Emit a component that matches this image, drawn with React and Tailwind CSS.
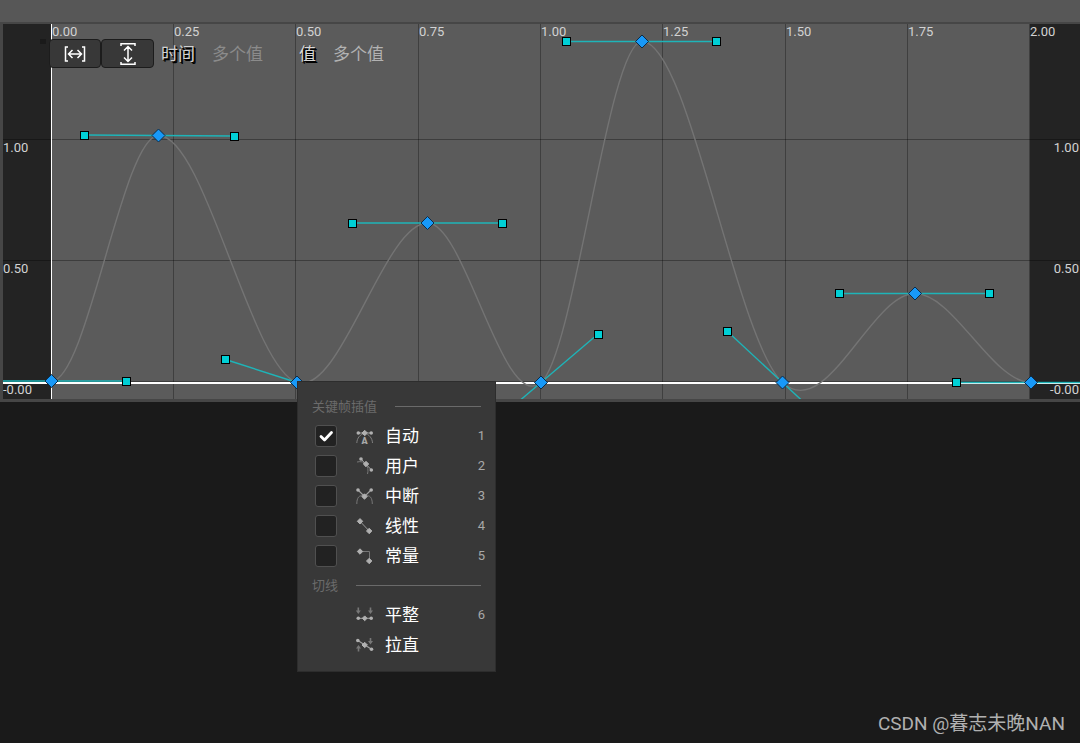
import React, { useState } from "react";

const timeTicks = [
  { x: 51, label: "0.00" },
  { x: 173, label: "0.25" },
  { x: 295, label: "0.50" },
  { x: 418, label: "0.75" },
  { x: 540, label: "1.00" },
  { x: 662, label: "1.25" },
  { x: 785, label: "1.50" },
  { x: 907, label: "1.75" },
  { x: 1029, label: "2.00" },
];

const valueTicks = [
  { y: 115, label: "1.00" },
  { y: 236, label: "0.50" },
  { y: 357, label: "-0.00" },
];

// slope is dy/dx at the key, handles are the ends of its tangent
const keys = [
  { x: 51.5, y: 357, slope: 0, handles: [[-24, 357], [126.5, 357]] },
  { x: 158.5, y: 111.5, slope: 0, handles: [[84, 111], [234, 112]] },
  { x: 297, y: 358.5, slope: 0.319, handles: [[225.5, 335.5]] },
  { x: 427.5, y: 199, slope: 0, handles: [[352.5, 199], [502.5, 199]] },
  { x: 541, y: 358.5, slope: -0.851, handles: [[484, 407], [598, 310]] },
  { x: 642, y: 17.5, slope: 0, handles: [[566.5, 17.5], [716.5, 17.5]] },
  { x: 782.5, y: 358.5, slope: 0.927, handles: [[727.5, 307.5], [837.5, 409.5]] },
  { x: 915, y: 269.5, slope: 0, handles: [[839.5, 269.5], [989.5, 269.5]] },
  { x: 1031, y: 358.5, slope: 0, handles: [[956, 358.5], [1106, 358.5]] },
];

const curvePath = keys
  .map((key, i) => {
    if (i === 0) return `M${key.x},${key.y}`;
    const prev = keys[i - 1];
    const d = (key.x - prev.x) / 3;
    return `C${prev.x + d},${prev.y + prev.slope * d} ${key.x - d},${key.y - key.slope * d} ${key.x},${key.y}`;
  })
  .join(" ");

const interpolations = [
  { id: "auto", label: "自动", shortcut: "1", Icon: AutoIcon },
  { id: "user", label: "用户", shortcut: "2", Icon: UserIcon },
  { id: "break", label: "中断", shortcut: "3", Icon: BreakIcon },
  { id: "linear", label: "线性", shortcut: "4", Icon: LinearIcon },
  { id: "constant", label: "常量", shortcut: "5", Icon: ConstantIcon },
];

const tangents = [
  { id: "flatten", label: "平整", shortcut: "6", Icon: FlattenIcon },
  { id: "straighten", label: "拉直", shortcut: "", Icon: StraightenIcon },
];

export default function App() {
  return (
    <div className="flex min-h-screen flex-col bg-[#1a1a1a] font-[Roboto,'Noto_Sans_CJK_SC',sans-serif]">
      <div className="h-[22px] bg-[#575757]" />
      <main className="relative border-t-2 border-b-3 border-[#464646]">
        <CurveCanvas />
        <Toolbar />
        <KeyMenu />
      </main>
      <footer className="mt-auto px-[15px] pb-[5px] text-right text-[19px] leading-7 text-[#b0b0b0]">
        CSDN @暮志未晚NAN
      </footer>
    </div>
  );
}

function CurveCanvas() {
  return (
    <svg viewBox="0 0 1080 375" className="block h-auto w-full">
      <rect width="1080" height="375" fill="#5b5b5b" />
      <rect width="51" height="375" fill="#232323" />
      <rect x="1030" width="50" height="375" fill="#232323" />
      <rect x="40" y="15" width="6" height="5" fill="#1a1a1a" />

      {/* Grid */}
      {timeTicks.map((tick) => (
        <rect key={tick.label} x={tick.x} width="1" height="375" fill="#3f3f3f" />
      ))}
      {valueTicks.map((tick) => (
        <rect key={tick.label} x="3" y={tick.y} width="1077" height="1" fill="#000" fillOpacity="0.32" />
      ))}
      <rect x="51" width="1" height="375" fill="#fff" />
      <rect x="3" y="358" width="1077" height="2" fill="#fff" />

      <g fill="#d2d2d2" fontSize="13">
        {timeTicks.map((tick) => (
          <text key={tick.label} x={tick.x + 1} y="12">
            {tick.label}
          </text>
        ))}
        {valueTicks.map((tick) => (
          <g key={tick.label}>
            <text x="3" y={tick.y + 13}>
              {tick.label}
            </text>
            <text x="1079" y={tick.y + 13} textAnchor="end">
              {tick.label}
            </text>
          </g>
        ))}
      </g>

      {/* Curve, tangents and keys */}
      <path d={curvePath} fill="none" stroke="#747474" strokeWidth="1.4" />
      {keys.map((key) => (
        <g key={key.x}>
          {key.handles.map(([x, y]) => (
            <line key={x} x1={key.x} y1={key.y} x2={x} y2={y} stroke="#1eb4b8" strokeWidth="1.4" />
          ))}
          {key.handles.map(([x, y]) => (
            <rect
              key={x}
              x={Math.floor(x) - 3.5}
              y={Math.floor(y) - 3.5}
              width="8"
              height="8"
              fill="#00d0d6"
              stroke="#000"
            />
          ))}
          <path
            d={`M${key.x},${key.y - 6.5} l6.5,6.5 l-6.5,6.5 l-6.5,-6.5 z`}
            fill="#1899f8"
            stroke="#0b2c49"
          />
        </g>
      ))}
      <rect width="3" height="375" fill="#464646" />
    </svg>
  );
}

function Toolbar() {
  return (
    <div className="absolute top-[15px] left-[49px] flex items-center text-[17px] leading-6">
      <button
        type="button"
        aria-label="Fit horizontal"
        className="flex h-[29px] w-[52px] items-center justify-center rounded border border-[#1c1c1c] bg-[#383838]"
      >
        <svg width="22" height="16" viewBox="0 0 22 16" fill="none" stroke="#fff" strokeWidth="1.5">
          <path d="M4 1H1.500V15H4 M18 1h2.500V15H18 M4.500 8H17.500 M8.500 4L4.500 8l4 4 M13.500 4l4 4-4 4" />
        </svg>
      </button>
      <button
        type="button"
        aria-label="Fit vertical"
        className="flex h-[29px] w-[53px] items-center justify-center rounded border border-[#1c1c1c] bg-[#383838]"
      >
        <svg width="16" height="22" viewBox="0 0 16 22" fill="none" stroke="#fff" strokeWidth="1.5">
          <path d="M1 3V.8H15V3 M1 19v2.200H15V19 M8 3.500V18.500 M4 7.500l4-4 4 4 M4 14.500l4 4 4-4" />
        </svg>
      </button>
      <label htmlFor="time" className="ml-[7px] text-[#d0d0d0] [text-shadow:1px_1px_0_#000,2px_2px_0_#000]">
        时间
      </label>
      <input
        id="time"
        disabled
        value="多个值"
        className="ml-[17px] w-[70px] bg-transparent text-[#8b8b8b]"
      />
      <label htmlFor="value" className="ml-[17px] text-[#d8d8d8] [text-shadow:1px_1px_0_#000,2px_2px_0_#000]">
        值
      </label>
      <input
        id="value"
        defaultValue="多个值"
        className="ml-[17px] w-[70px] bg-transparent text-[#b2b2b2] outline-none"
      />
    </div>
  );
}

function KeyMenu() {
  const [mode, setMode] = useState("auto");

  return (
    <div className="absolute top-[357px] left-[297px] w-[199px] border border-[#2d2d2d] bg-[#383838] pt-[10px] pb-[11px]">
      <SectionTitle>关键帧插值</SectionTitle>
      {interpolations.map(({ id, label, shortcut, Icon }) => (
        <label key={id} className="flex h-[30px] items-center pr-[10px] pl-[17px]">
          <span className="relative flex h-[22px] w-[22px]">
            <input
              type="checkbox"
              checked={mode === id}
              onChange={() => setMode(id)}
              className="h-full w-full appearance-none rounded-[3px] border border-[#505050] bg-[#222]"
            />
            {mode === id && (
              <svg
                viewBox="0 0 22 22"
                className="pointer-events-none absolute inset-0"
                fill="none"
                stroke="#fff"
                strokeWidth="2.8"
                strokeLinecap="round"
                strokeLinejoin="round"
              >
                <path d="M6 11.500l3.500 3.500 7-7.500" />
              </svg>
            )}
          </span>
          <span className="ml-[19px]">
            <Icon />
          </span>
          <span className="ml-[11px] flex-1 text-[17px] leading-6 text-white">{label}</span>
          <span className="text-[13px] text-[#a8a8a8]">{shortcut}</span>
        </label>
      ))}
      <SectionTitle>切线</SectionTitle>
      {tangents.map(({ id, label, shortcut, Icon }) => (
        <button
          key={id}
          type="button"
          className="flex h-[30px] w-full items-center pr-[10px] pl-[58px] text-left"
        >
          <Icon />
          <span className="ml-[11px] flex-1 text-[17px] leading-6 text-white">{label}</span>
          <span className="text-[13px] text-[#a8a8a8]">{shortcut}</span>
        </button>
      ))}
    </div>
  );
}

function SectionTitle({ children }) {
  return (
    <div className="flex h-[29px] items-center gap-[18px] pr-[14px] pl-[14px]">
      <h2 className="text-[13px] leading-5 text-[#6b6b6b]">{children}</h2>
      <span className="h-px flex-1 bg-[#6a6a6a]" />
    </div>
  );
}

function MenuIcon({ children }) {
  return (
    <svg width="18" height="18" viewBox="0 0 18 18" fill="none">
      {children}
    </svg>
  );
}

function Diamond({ x, y, r = 2.7 }) {
  return (
    <path
      d={`M${x},${y - r} l${r},${r} l${-r},${r} l${-r},${-r} z`}
      fill="#b0b0b0"
      stroke="#b0b0b0"
      strokeLinejoin="round"
    />
  );
}

function Dot({ x, y }) {
  return <circle cx={x} cy={y} r="1.8" fill="#b0b0b0" />;
}

function AutoIcon() {
  return (
    <MenuIcon>
      <path d="M2 6H15" stroke="#a0a0a0" />
      <path d="M.8 16C1 11 4 7.500 8.700 6C13 7.500 16.300 11 16.500 16" stroke="#808080" />
      <Dot x={2.3} y={6} />
      <Diamond x={8.7} y={6} />
      <Dot x={15.2} y={6} />
      <text x="8.600" y="17" textAnchor="middle" fontSize="9" fontWeight="900" fill="#a8a8a8">
        A
      </text>
    </MenuIcon>
  );
}

function UserIcon() {
  return (
    <MenuIcon>
      <path d="M5 2L15.500 13" stroke="#a0a0a0" />
      <path d="M1 5C5 4 8 5 10 7C12 10 12.500 13 11.500 17" stroke="#777" />
      <Dot x={5} y={2} />
      <Diamond x={10} y={7} />
      <Dot x={15.3} y={13} />
    </MenuIcon>
  );
}

function BreakIcon() {
  return (
    <MenuIcon>
      <path d="M2 3L8.500 9.500L15 3" stroke="#a0a0a0" strokeWidth="1.2" />
      <path d="M.8 17C.8 11 3 7 8.500 9.500C14 7 16.300 11 16.300 17" stroke="#777" />
      <Dot x={2} y={3} />
      <Diamond x={8.5} y={9.5} />
      <Dot x={15.2} y={3} />
    </MenuIcon>
  );
}

function LinearIcon() {
  return (
    <MenuIcon>
      <path d="M4 4.300L13.200 14" stroke="#999" />
      <Diamond x={4} y={4.3} />
      <Diamond x={13.2} y={14} />
    </MenuIcon>
  );
}

function ConstantIcon() {
  return (
    <MenuIcon>
      <path d="M4 4.500H13.500V14" stroke="#777" />
      <Diamond x={4} y={4.5} />
      <Diamond x={13.2} y={14} />
    </MenuIcon>
  );
}

function FlattenIcon() {
  return (
    <MenuIcon>
      <path d="M2.300 1.500V6 M14.500 1.500V6" stroke="#777" strokeWidth="1.6" />
      <path d="M-.2 4.500h5l-2.500 3.500z M12 4.500h5l-2.500 3.500z" fill="#777" />
      <path d="M2 12.300H15" stroke="#a0a0a0" />
      <Dot x={2.3} y={12.3} />
      <Diamond x={8.7} y={12.3} r={2.4} />
      <Dot x={15.2} y={12.3} />
    </MenuIcon>
  );
}

function StraightenIcon() {
  return (
    <MenuIcon>
      <path d="M2.500 10.500V15.500 M14.500 2V7" stroke="#777" strokeWidth="1.6" />
      <path d="M0 12.500h5l-2.500-3.500z M12 5h5l-2.500 3.500z" fill="#777" />
      <path d="M1.500 4.300L15.500 13.300" stroke="#a0a0a0" strokeWidth="1.2" />
      <Dot x={1.8} y={4.5} />
      <Diamond x={8.7} y={9} />
      <Dot x={15.5} y={13.3} />
    </MenuIcon>
  );
}
